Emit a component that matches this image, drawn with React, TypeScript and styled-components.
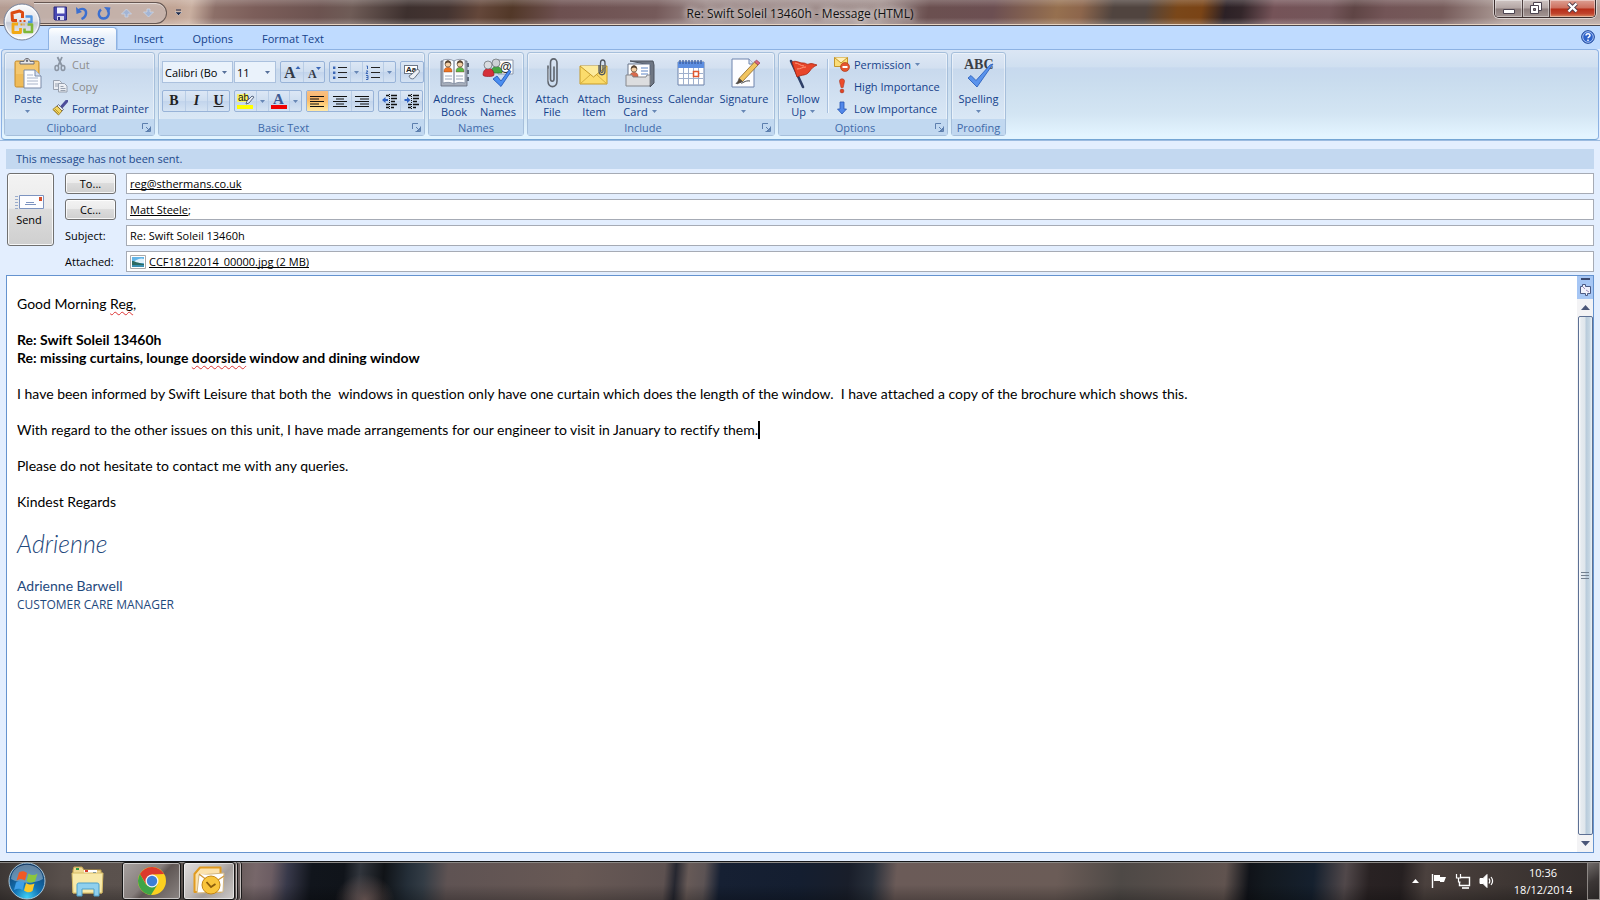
import React from 'react';
import styled, { createGlobalStyle, css } from 'styled-components';

const Global = createGlobalStyle`
  * { box-sizing: border-box; }
  body { margin: 0; background: #e3eefe; font-family: "Open Sans", "Noto Sans", sans-serif; font-size: 11px; line-height: 13px; color: #15428b; }
  button, input, select { font: inherit; color: inherit; margin: 0; }
  button { border: 0; padding: 0; background: none; }
  svg { display: block; flex: none; }
  a { color: inherit; }
`;

/* ---------- window frame ---------- */
const Page = styled.div`
  min-height: 100vh;
  display: flex;
  flex-direction: column;
`;
const TitleBar = styled.header`
  position: relative;
  height: 26px;
  display: flex;
  align-items: flex-start;
  justify-content: space-between;
  border-bottom: 1px solid #4b474d;
  box-shadow: inset 0 -1px #e6d3c2;
  background:
    linear-gradient(180deg, rgba(255,255,255,.2), rgba(255,255,255,0) 30%, rgba(255,255,255,0) 70%, rgba(255,255,255,.25)),
    linear-gradient(100deg, #b49c92 0, #c2a595 11%, #c9afa0 12%, #8c6f68 13.5%, #7c5e5a 16%, #6c5350 20%, #6f5c57 22%, #3d302e 25.5%, #443431 28%, #64473a 30%, #523828 32%, #6d5050 35%, #755a5a 41%, #9a8786 44%, #a08e8c 55%, #6b5050 58%, #6c4f52 62%, #96704f 66%, #8d664c 67.5%, #50443f 69.5%, #50443f 71.5%, #7a4719 73.5%, #7a4416 75%, #2c2126 76.5%, #33262a 77.5%, #755358 79.5%, #74565a 83%, #5f4545 84.500%, #735557 86.5%, #765b5a 90%, #ae9d98 94%, #b5a39c 100%);
`;
const QuickAccess = styled.div`
  display: flex;
  align-items: center;
  gap: 6px;
  height: 22px;
  margin: 2px 0 0 34px;
  padding: 0 10px 0 18px;
  border: 1px solid #655651;
  border-left: 0;
  border-radius: 0 11px 11px 0;
  background: rgba(205, 196, 196, .45);
  box-shadow: inset 0 1px rgba(255,255,255,.5);
`;
const IconButton = styled.button`
  display: flex;
  align-items: center;
  justify-content: center;
  min-width: 16px;
  height: 16px;
`;
const LeftGroup = styled.div`
  display: flex;
  align-items: center;
  gap: 3px;
  flex: 1;
`;
const Title = styled.h1`
  margin: 7px 0 0;
  font-size: 12px;
  line-height: 14px;
  font-weight: 400;
  color: #111;
  text-shadow: 0 0 6px #fff, 0 0 8px rgba(255,255,255,.8);
`;
const RightGroup = styled.div`
  flex: 1;
  display: flex;
  justify-content: flex-end;
`;
const WindowButtons = styled.div`
  display: flex;
  height: 18px;
  margin-right: 4px;
  border: 1px solid #3a2d2d;
  border-top: 0;
  border-radius: 0 0 5px 5px;
  box-shadow: 0 0 0 1px rgba(255,255,255,.55);
  overflow: hidden;
`;
const WindowButton = styled.button<{ $close?: boolean }>`
  width: ${p => (p.$close ? 46 : 27)}px;
  display: flex;
  align-items: center;
  justify-content: center;
  padding-bottom: 2px;
  box-shadow: inset 0 0 0 1px rgba(255,255,255,.4);
  background: ${p => p.$close
    ? 'linear-gradient(#dda093, #cd6e5c 48%, #b62d17 52%, #c0432c 80%, #d98a62)'
    : 'linear-gradient(#cfc5c3, #b3a5a3 48%, #8c7d7c 52%, #a39593)'};
  & + & { border-left: 1px solid #4d3f3f; }
`;
const Orb = styled.button`
  position: absolute;
  left: 3px;
  top: 3px;
  z-index: 2;
`;

/* ---------- tabs ---------- */
const Tabs = styled.nav`
  display: flex;
  align-items: flex-end;
  gap: 5px;
  height: 23px;
  padding: 0 4px 0 48px;
  background: #bfdbff;
`;
const Tab = styled.button<{ $active?: boolean }>`
  height: 22px;
  padding: 0 11px;
  border: 1px solid transparent;
  border-bottom: 0;
  border-radius: 4px 4px 0 0;
  position: relative;
  z-index: 1;
  ${p => p.$active && css`
    margin-bottom: -1px;
    height: 23px;
    background: linear-gradient(#fff, #e9f1fb 40%, #dfe9f5);
    border-color: #8db2e3;
    box-shadow: 1px 0 #a9c6ec, inset 0 1px #fff;
  `}
`;
const HelpButton = styled(IconButton)`
  margin: 0 0 4px auto;
`;

/* ---------- ribbon ---------- */
const Ribbon = styled.section`
  display: flex;
  gap: 3px;
  height: 91px;
  margin: 0 1px;
  padding: 2px 2px 3px;
  border: 1px solid #8db2e3;
  border-bottom-color: #74a5d4;
  border-radius: 4px;
  background: linear-gradient(#dbe6f4, #cfdff0 19%, #c7d9ee 20%, #c9dcee 35%, #d3e5f3 72%, #e3f4ff 96%);
`;
const Group = styled.section<{ $w: number }>`
  width: ${p => p.$w}px;
  display: flex;
  flex-direction: column;
  border: 1px solid #a6bfdb;
  border-radius: 3px;
  background: linear-gradient(#dee8f5, #d3e0f0 18%, #c8d9ed 20%, #d9e7f5 80%);
  box-shadow: inset 0 0 0 1px rgba(255,255,255,.45);
`;
const GroupBody = styled.div`
  flex: 1;
  display: flex;
  padding: 0 3px;
`;
const GroupFooter = styled.h2`
  display: flex;
  align-items: center;
  height: 16px;
  margin: 0;
  font-size: 11px;
  font-weight: 400;
  color: #3e6aaa;
  background: #c1d8f0;
  & > span { flex: 1; text-align: center; white-space: nowrap; }
`;
const BigButton = styled.button<{ $w: number }>`
  width: ${p => p.$w}px;
  flex: none;
  display: flex;
  flex-direction: column;
  align-items: center;
  gap: 3px;
  padding-top: 4px;
`;
const BigLabel = styled.span`
  display: flex;
  flex-direction: column;
  align-items: center;
  white-space: nowrap;
`;
const LabelLine = styled.span`
  display: flex;
  align-items: center;
  gap: 4px;
  height: 13px;
`;
const Divider = styled.span`
  width: 2px;
  margin: 6px 1px 6px 3px;
  border-left: 1px solid #a8c0de;
  background: #eef5fc;
`;
const SmallColumn = styled.div`
  display: flex;
  flex-direction: column;
  margin: 0 0 0 4px;
`;
const SmallButton = styled.button<{ $off?: boolean }>`
  display: flex;
  align-items: center;
  gap: 4px;
  height: 22px;
  white-space: nowrap;
  color: ${p => (p.$off ? '#8d8d8d' : '#15428b')};
`;
const FontRows = styled.div`
  display: flex;
  flex-direction: column;
  gap: 7px;
  padding-top: 8px;
`;
const FontRow = styled.div`
  display: flex;
  gap: 4px;
`;
const ButtonSet = styled.div`
  display: flex;
  height: 22px;
  border: 1px solid #98b3d8;
  border-radius: 2px;
  background: linear-gradient(#dce7f5, #cfdef0 48%, #c2d4ec 50%, #d5e3f3);
  overflow: hidden;
`;
const SetButton = styled.button<{ $w: number; $on?: boolean }>`
  width: ${p => p.$w}px;
  display: flex;
  align-items: center;
  justify-content: center;
  background: ${p => (p.$on ? 'linear-gradient(#f8bf83, #fbb768 40%, #ffd27c 70%, #ffe9a8)' : 'none')};
  & + & { border-left: 1px solid #b9cde6; }
`;
const ComboSet = styled.div`
  display: flex;
  gap: 1px;
`;
const Combo = styled.label<{ $w: number }>`
  display: flex;
  align-items: center;
  width: ${p => p.$w}px;
  height: 22px;
  padding: 0 5px 0 2px;
  border: 1px solid #abc1de;
  background: #eaf2fb;
  color: #000;
`;
const ComboSelect = styled.select`
  appearance: none;
  flex: 1;
  width: 0;
  border: 0;
  padding: 0;
  background: none;
  outline: 0;
`;

/* ---------- envelope ---------- */
const Compose = styled.main`
  flex: 1;
  display: flex;
  flex-direction: column;
  padding: 8px 6px 8px;
  background: #e3eefe;
  border-top: 1px solid #9cbbe0;
`;
const InfoBar = styled.p`
  margin: 0;
  height: 20px;
  padding: 3px 10px;
  line-height: 14px;
  color: #1e4a8c;
  background: #c3d8f0;
`;
const Envelope = styled.div`
  display: grid;
  grid-template-columns: 47px 1fr;
  gap: 11px;
  padding: 4px 0 3px 1px;
`;
const buttonSkin = css`
  border: 1px solid #707070;
  border-radius: 3px;
  color: #000;
  background: linear-gradient(#f3f3f3, #ebebeb 48%, #dcdcdc 50%, #cfcfcf);
  box-shadow: inset 0 0 0 1px rgba(255,255,255,.8);
`;
const SendButton = styled.button`
  ${buttonSkin}
  height: 73px;
  padding-right: 3px;
  display: flex;
  flex-direction: column;
  align-items: center;
  justify-content: center;
  gap: 3px;
`;
const Fields = styled.div`
  display: flex;
  flex-direction: column;
  gap: 5px;
`;
const FieldRow = styled.div`
  display: grid;
  grid-template-columns: 51px 1fr;
  gap: 10px;
  align-items: center;
  & > label, & > span { color: #000; }
`;
const PickButton = styled.button`
  ${buttonSkin}
  height: 21px;
`;
const Field = styled.div`
  display: flex;
  align-items: center;
  height: 21px;
  padding: 0 3px;
  border: 1px solid #a6abb5;
  background: #fff;
  color: #000;
  text-decoration-skip-ink: none;
  white-space: nowrap;
`;
const FieldInput = styled.input`
  flex: 1;
  min-width: 0;
  border: 0;
  padding: 0;
  outline: 0;
  background: none;
`;
const FileLink = styled.a`
  display: flex;
  align-items: center;
  gap: 3px;
`;

/* ---------- message body ---------- */
const Editor = styled.div`
  flex: 1;
  display: flex;
  border: 1px solid #6593cf;
  background: #fff;
`;
const MessageText = styled.article`
  flex: 1;
  padding: 19px 10px;
  font-family: Lato, "Open Sans", sans-serif;
  font-size: 14px;
  line-height: 18px;
  font-variant-ligatures: none;
  color: #000;
  white-space: pre-wrap;
  & > p { margin: 0 0 18px; }
`;
const Misspelt = styled.span`
  text-decoration: underline wavy #d33 1px;
  text-underline-offset: 2px;
  text-decoration-skip-ink: none;
`;
const Caret = styled.span`
  display: inline-block;
  width: 2px;
  height: 18px;
  vertical-align: top;
  background: #000;
`;
const Autograph = styled.p`
  font-size: 25px;
  line-height: 28px;
  font-weight: 300;
  font-style: italic;
  color: #1f497d;
`;
const SignOff = styled.p`
  padding-top: 2px;
  color: #1f497d;
`;
const JobTitle = styled.span`
  font-family: "Open Sans", sans-serif;
  font-size: 12px;
`;
const ScrollBar = styled.div`
  width: 16px;
  display: flex;
  flex-direction: column;
  align-items: center;
  background: #f3f3f5;
`;
const RulerToggle = styled.button`
  width: 16px;
  height: 23px;
  display: flex;
  justify-content: center;
  padding-top: 2px;
  background: #a6c6f4;
`;
const ScrollArrow = styled(IconButton)`
  height: 17px;
`;
const ScrollThumb = styled.div`
  flex: 1;
  width: 15px;
  display: flex;
  align-items: center;
  justify-content: center;
  border: 1px solid #5d7094;
  border-radius: 2px;
  background: linear-gradient(90deg, #fff, #e6ebf0 15%, #dfe6ec 45%, #b8cbdb 55%, #c5d6e3 80%, #eef3f7);
`;

/* ---------- taskbar ---------- */
const TaskBar = styled.footer`
  height: 39px;
  display: flex;
  align-items: stretch;
  border-top: 1px solid #15171a;
  box-shadow: inset 0 1px #8b8885;
  color: #fff;
  background:
    radial-gradient(ellipse 30px 26px at 22.8% 100%, rgba(112,90,86,.8), transparent),
    linear-gradient(180deg, rgba(0,0,0,0) 60%, rgba(0,0,0,.25)),
    linear-gradient(95deg, #3d3735 0, #59504c 4%, #5d5450 14%, #77676a 16%, #6c5d63 17%, #38394a 18%, #11151c 19.5%, #10141a 21.5%, #31353c 22.5%, #101317 24%, #242e38 25.5%, #333c45 26.5%, #5f5353 28%, #685955 36%, #5d5150 41.5%, #262730 42.2%, #675a57 43%, #5c5354 44%, #162033 45%, #141e30 50%, #191e2a 53%, #29303b 54.5%, #6b5b58 56%, #6b5c57 66%, #4e4946 70%, #60534f 76.5%, #101319 78%, #13191f 79%, #15202e 82%, #51484a 84%, #292223 85.5%, #262021 87.5%, #4b413e 89%, #3f3734 94%, #322c2b 100%);
`;
const TaskButton = styled.button<{ $w: number; $state?: 'open' | 'active' }>`
  width: ${p => p.$w}px;
  display: flex;
  align-items: center;
  justify-content: center;
  margin-right: 2px;
  border: 1px solid transparent;
  border-radius: 3px;
  ${p => p.$state && css`
    border-color: #151515;
    background: ${p.$state === 'open'
      ? 'linear-gradient(135deg, #a8a2a0, #857d7b 45%, #5f5654 55%, #8b8583)'
      : 'linear-gradient(135deg, #e2dfde, #bdb8b6 45%, #a39d9b 60%, #cfcbc9)'};
    box-shadow: inset 0 0 0 1px rgba(255,255,255,.55);
  `}
`;
const StackEdge = styled.span`
  width: 4px;
  margin-left: -3px;
  border-right: 1px solid #1c1a1a;
  border-radius: 0 3px 3px 0;
  box-shadow: inset -1px 0 #c5c0be;
  & + & { margin-left: 0; }
`;
const Tray = styled.div`
  margin-left: auto;
  display: flex;
  align-items: center;
  gap: 8px;
`;
const Clock = styled.time`
  width: 72px;
  margin-left: 4px;
  text-align: center;
  line-height: 17px;
`;
const ShowDesktop = styled.button`
  width: 13px;
  align-self: stretch;
  border: 1px solid #8d8885;
  background: linear-gradient(150deg, #6f6a68, #3c3736 50%, #292524);
`;

/* ---------- drawings ---------- */
const Down = ({ c = '#6787b5' }: { c?: string }) => (
  <svg width="5" height="3"><path d="M0 0h5L2.5 3z" fill={c} /></svg>
);
const Launcher = () => (
  <IconButton aria-label="More settings">
    <svg width="9" height="9" fill="none" stroke="#5d7fae">
      <path d="M.5 6V.5H6" /><path d="M3.500 8.500h5v-5M4 4l3 3" /><path d="M5 7.500h2.500V5" />
    </svg>
  </IconButton>
);
const OfficeOrb = () => (
  <svg width="38" height="38" viewBox="0 0 38 38">
    <defs>
      <linearGradient id="orb" x1="0" y1="0" x2="0" y2="1">
        <stop offset="0" stopColor="#fdfdfd" /><stop offset=".48" stopColor="#dfe2ea" />
        <stop offset=".52" stopColor="#c3c9d6" /><stop offset="1" stopColor="#fff" />
      </linearGradient>
    </defs>
    <circle cx="19" cy="19" r="18" fill="url(#orb)" stroke="#76829a" />
    <circle cx="19" cy="19" r="16.500" fill="none" stroke="#fff" opacity=".8" />
    <g fill="none" strokeLinejoin="round">
      <path d="M14 17.500H9.500L9 10l7.500-2 3 1.500V15" stroke="#dc4a12" strokeWidth="3" />
      <path d="M22.500 13.500h6V19H25" stroke="#4f94e0" strokeWidth="2.400" />
      <path d="M15 21h-5v8.500h7.500V25" stroke="#f2a916" strokeWidth="2.800" />
      <path d="M24.500 21.500H29V29h-7.500v-3.500" stroke="#7fb737" strokeWidth="2.600" />
      <path d="M16.500 18h2M20.500 18h2" stroke="#dc4a12" strokeWidth="2" /><path d="M17.500 21.500h4" stroke="#e0a020" strokeWidth="2" strokeDasharray="2 1" />
    </g>
  </svg>
);
const Save = () => (
  <svg width="15" height="15" viewBox="0 0 15 15">
    <path d="M1 1h12.500v13H2L1 13z" fill="#4a49b4" stroke="#29297e" />
    <path d="M4 1.500h7.500v6H4z" fill="#f3f5ff" /><path d="M4 10h7v4H4z" fill="#d5d8ee" /><path d="M5 11h2v3H5z" fill="#29297e" />
  </svg>
);
const Undo = ({ color = '#3b6fd0' }: { color?: string }) => (
  <svg width="14" height="14" viewBox="0 0 14 14">
    <path d="M3 4.500c4-3 8.500-1.500 8 3-.3 2.500-2 4.500-4.500 5.500" fill="none" stroke={color} strokeWidth="2.400" />
    <path d="M1 1l.5 7L7 6z" fill={color} />
  </svg>
);
const Redo = () => (
  <svg width="14" height="14" viewBox="0 0 14 14">
    <path d="M4 3.500C0 7 2 12.500 6.500 12.500c5 0 6.500-5.500 4-8.500" fill="none" stroke="#3b6fd0" strokeWidth="2.400" />
    <path d="M7 1l6.500.5L12 7z" fill="#3b6fd0" />
  </svg>
);
const PaleArrow = ({ up }: { up?: boolean }) => (
  <svg width="11" height="10" viewBox="0 0 11 10">
    <path d={up ? 'M5.500 1L10.500 6H7v3H4V6H.5z' : 'M5.500 9L10.500 4H7V1H4v3H.5z'} fill="#a3b4d3" stroke="#ccd5e6" strokeWidth=".8" />
  </svg>
);
const Paste = () => (
  <svg width="32" height="32" viewBox="0 0 32 32">
    <rect x="3" y="4" width="24" height="26" rx="1.500" fill="#efbb58" stroke="#c58c2c" />
    <path d="M4 5h22v12H4z" fill="#f6cf7e" opacity=".6" />
    <path d="M8 7V4.500h4c0-4 6-4 6 0h4V7z" fill="#e9e9ec" stroke="#6c6c74" />
    <circle cx="15" cy="3.800" r="1.200" fill="#6c6c74" />
    <path d="M12 13h11l6 6v12H12z" fill="#fbfcff" stroke="#7b8ba8" />
    <path d="M23 13v6h6" fill="#d5dff0" stroke="#7b8ba8" />
    <path d="M15 18h6M15 21h11M15 24h11M15 27h11" stroke="#a9b4c9" />
  </svg>
);
const Cut = () => (
  <svg width="16" height="16" viewBox="0 0 16 16" fill="none" stroke="#8b95a3">
    <path d="M5.500 1l4.500 9M10 1L6 10" strokeWidth="1.800" />
    <ellipse cx="4.800" cy="12" rx="1.800" ry="2.500" strokeWidth="1.500" /><ellipse cx="11" cy="12" rx="1.800" ry="2.500" strokeWidth="1.500" />
  </svg>
);
const Copy = () => (
  <svg width="16" height="16" viewBox="0 0 16 16" fill="#eceff4" stroke="#98a1af">
    <path d="M1.500 2.500h6l2 2v7h-8z" /><path d="M3 6h4M3 8h4" />
    <path d="M6.500 5.500h6l2.500 2.500v6h-8.500z" /><path d="M8.500 8.500h3M8.500 10.500h5M8.500 12.500h5" />
  </svg>
);
const Brush = () => (
  <svg width="16" height="16" viewBox="0 0 16 16">
    <path d="M15 .8l-5 5.700" stroke="#4d4d9a" strokeWidth="3" strokeLinecap="round" />
    <path d="M6.500 4.500l5 5-1.500 1.500-5-5z" fill="#e4e6ef" stroke="#555b70" strokeWidth=".8" />
    <path d="M5 6l5 5-3.500 4L.8 9.500z" fill="#f2d661" stroke="#8a6b16" strokeWidth=".8" />
    <path d="M3 9l4 4M2 10l4 4" stroke="#a8851f" strokeWidth=".8" />
  </svg>
);
const GrowFont = ({ small }: { small?: boolean }) => (
  <svg width="18" height="18" viewBox="0 0 18 18">
    <text x={small ? 3 : 1} y="15" fontFamily="Liberation Serif, serif" fontWeight="700" fontSize={small ? 12 : 16} fill="#333b48">A</text>
    <path d={small ? 'M11 4h5l-2.500 3z' : 'M12.500 6h5L15 3z'} fill="#3a66b5" />
  </svg>
);
const ListIcon = ({ numbered }: { numbered?: boolean }) => (
  <svg width="16" height="16" viewBox="0 0 16 16">
    <path d="M6 3.500h9M6 8.500h9M6 13.500h9" stroke="#222" strokeWidth="1.200" />
    {numbered
      ? <path d="M1.500 2h1v3M1 7h2L1 9.500h2M1 11.500h2v2H1.500h1.500v2H1" fill="none" stroke="#3a66b5" />
      : <path d="M1 2.500h2.400v2.400H1zM1 7.500h2.400v2.400H1zM1 12.500h2.400v2.400H1z" fill="#3a66b5" />}
  </svg>
);
const ClearFormat = () => (
  <svg width="18" height="18" viewBox="0 0 18 18">
    <rect x="1.500" y="2.500" width="13" height="8" fill="#fff" stroke="#6b7687" />
    <text x="3" y="9" fontSize="8" fontWeight="700" fontFamily="Liberation Sans, sans-serif" fill="#222">Aa</text>
    <path d="M6 13l3-2 5-4.500c2-.5 3 1.500 2 3L11 15.500c-2 1-4.500 0-5-2.500z" fill="#eceff5" stroke="#6b7687" />
  </svg>
);
const Letter = styled.span<{ $kind: 'b' | 'i' | 'u' }>`
  font-family: "Liberation Serif", serif;
  font-size: 14px;
  line-height: 14px;
  font-weight: 700;
  color: #222;
  font-style: ${p => (p.$kind === 'i' ? 'italic' : 'normal')};
  text-decoration: ${p => (p.$kind === 'u' ? 'underline' : 'none')};
`;
const Highlight = () => (
  <svg width="18" height="18" viewBox="0 0 18 18">
    <path d="M0 2h11v8H0z" fill="#f4f46a" />
    <text x="1" y="9" fontSize="10" fontFamily="Liberation Sans, sans-serif" fill="#111">ab</text>
    <path d="M9 12l1-3 5-5 2 1-5 6z" fill="#e8ecf4" stroke="#5b6a84" /><path d="M0 13h16v4H0z" fill="#ff0" />
  </svg>
);
const FontColor = () => (
  <svg width="18" height="18" viewBox="0 0 18 18">
    <text x="3" y="12" fontSize="15" fontWeight="700" fontFamily="Liberation Serif, serif" fill="#3c5a92">A</text>
    <path d="M1 13h16v4H1z" fill="#f00000" />
  </svg>
);
const Align = ({ d }: { d: string }) => (
  <svg width="15" height="13" viewBox="0 0 15 13"><path d={d} stroke="#111" strokeWidth="1.200" /></svg>
);
const Indent = ({ out }: { out?: boolean }) => (
  <svg width="16" height="15" viewBox="0 0 16 15">
    <path d="M4 1.500h3M9 1.500h6M9 4.500h6M9 7.500h4M4 10.500h3M9 10.500h6M4 13.500h3M9 13.500h3" stroke="#111" strokeWidth="1.300" />
    <path d="M7.500 0v15" stroke="#111" strokeDasharray="1 1" />
    <path d={out ? 'M0 6l3.500-3v2H6v2H3.500v2z' : 'M6.500 6L3 3v2H.5v2H3v2z'} fill="#2f62c4" />
  </svg>
);
const Person = ({ x, y, c }: { x: number; y: number; c: string }) => (
  <g transform={`translate(${x} ${y})`}>
    <path d="M0 11c0-5 8-5 8 0v1H0z" fill={c} stroke="#7a3a1a" strokeWidth=".4" />
    <circle cx="4" cy="4" r="3" fill="#f5cfa4" stroke="#4a3422" strokeWidth=".6" /><path d="M1 4c0-5 6-5 6 0-2-2-4-2-6 0z" fill="#5a4632" />
  </g>
);
const AddressBook = () => (
  <svg width="32" height="32" viewBox="0 0 32 32">
    <path d="M3 4h26v25H3z" fill="#a7afbc" stroke="#5f6878" strokeWidth=".8" />
    <path d="M5 3c4-1 8-1 11 1v23c-3-2-7-2-11-1zM27 3c-4-1-8-1-11 1v23c3-2 7-2 11-1z" fill="#fcfdff" stroke="#7f8aa0" strokeWidth=".8" />
    <Person x={6} y={3} c="#ee7422" /><Person x={18} y={3} c="#58b948" />
    <path d="M7 19h7M7 22h7M18 19h7M18 22h7" stroke="#9aa6ba" />
    <path d="M29 6h2v4h-2zM29 13h2v4h-2zM29 20h2v4h-2z" fill="#5e6b7f" />
  </svg>
);
const CheckNames = () => (
  <svg width="32" height="32" viewBox="0 0 32 32">
    <path d="M16 3h15v14H16z" fill="#fff" stroke="#8b97ab" />
    <text x="18" y="14" fontSize="12" fontWeight="700" fontFamily="Liberation Sans, sans-serif" fill="#333">@</text>
    <path d="M9 16c0-9 11-9 11 0z" fill="#46a544" stroke="#27702a" strokeWidth=".6" /><circle cx="14" cy="6" r="4" fill="#cdd1d6" stroke="#63686f" strokeWidth=".7" />
    <path d="M1 18c0-9 11-9 11 0 0 2-11 2-11 0z" fill="#d5303a" stroke="#8d141c" strokeWidth=".6" /><circle cx="6" cy="8" r="4" fill="#d9dce0" stroke="#63686f" strokeWidth=".7" />
    <path d="M11 22l4-3 4 5 8-11 2 1.500-10 15z" fill="#4a8df0" stroke="#1b53b5" strokeWidth=".8" />
  </svg>
);
const Clip = () => (
  <svg width="32" height="32" viewBox="0 0 32 32" fill="none" strokeLinecap="round">
    <g stroke="#5e646d" strokeWidth="1.600"><path d="M12 9v15c0 7.500 9 7.500 9 0V6c0-5.500-6.500-5.500-6.500 0v16c0 3 3.500 3 3.500 0V10" /></g>
    <path d="M12.300 12v12" stroke="#c8cdd4" strokeWidth=".6" />
  </svg>
);
const AttachItem = () => (
  <svg width="32" height="32" viewBox="0 0 32 32">
    <path d="M2 9h27v18H2z" fill="#fbdc6c" stroke="#c69a28" /><path d="M2 27l10-9M29 27l-10-9" stroke="#d6ae3c" />
    <path d="M2 9l13.500 11L29 9" fill="#fdeb9c" stroke="#c69a28" />
    <path d="M21 8v6c0 5 6 5 6 0V6c0-4-4.500-4-4.500 0v8c0 2 2.500 2 2.500 0V8" fill="none" stroke="#4f555e" strokeWidth="1.300" />
  </svg>
);
const BusinessCard = () => (
  <svg width="32" height="32" viewBox="0 0 32 32">
    <path d="M6 4h23l1 4v18l-4 4V8z" fill="#6e7683" stroke="#4c535f" />
    <path d="M4 7h22v16H4z" fill="#fff" stroke="#68748a" /><Person x={6} y={8} c="#d96a4c" />
    <path d="M17 11h7M17 14h7M17 17h7" stroke="#5f86c6" strokeWidth="1.200" />
    <path d="M2 18h6l1 2h13l1-2h3v10l-1 1H2z" fill="#dcdddf" stroke="#85878c" />
  </svg>
);
const Calendar = () => (
  <svg width="32" height="32" viewBox="0 0 32 32">
    <path d="M3 5h26v23H3z" fill="#fff" stroke="#6d82aa" /><path d="M3 5h26v6H3z" fill="#5d8ee0" />
    <path d="M4 16.500h24M4 21.500h24M8.500 11v17M13.500 11v17M18.500 11v17M23.500 11v17" stroke="#9fb0cd" />
    <path d="M5 3v4M8 3v4M11 3v4M14 3v4M17 3v4M20 3v4M23 3v4M26 3v4" stroke="#3a5c9f" strokeWidth="1.300" />
    <path d="M18.500 14.500h5v5h-5z" fill="#fff" stroke="#e0562f" strokeWidth="1.500" />
  </svg>
);
const Signature = () => (
  <svg width="32" height="32" viewBox="0 0 32 32">
    <path d="M4 2h17l5 5v23H4z" fill="#fdfdff" stroke="#6f84ad" /><path d="M21 2v5h5" fill="#dde6f5" stroke="#6f84ad" />
    <path d="M8 27c2-4 4-2 5-1s4-3 9-2" fill="none" stroke="#444" />
    <path d="M11 21.500L26.500 5l3.500 3-15.500 16.500z" fill="#f2c560" stroke="#8a6524" strokeWidth=".8" />
    <path d="M11 21.500l3.500 3L9 27z" fill="#5a4a3a" stroke="#444" strokeWidth=".6" /><path d="M26.500 5l2-2 3.500 3-2 2z" fill="#d9667c" stroke="#8c3346" strokeWidth=".6" />
  </svg>
);
const Flag = () => (
  <svg width="32" height="32" viewBox="0 0 32 32">
    <path d="M4 4l12 26" stroke="#2f4068" strokeWidth="2.600" strokeLinecap="round" />
    <path d="M5 5c4-2 7 1 11 1s3 2 6 1 4 0 8 1c-4 2-5 3-8 7s-6 2-12 5z" fill="#e8452a" stroke="#a9240f" strokeWidth=".8" />
    <path d="M8 6c4 0 5 3 9 3M10 12c4 0 5-2 9-2" stroke="#ff9a7d" fill="none" />
  </svg>
);
const Permission = () => (
  <svg width="16" height="16" viewBox="0 0 16 16">
    <path d="M.5 1.500h13v9H.5z" fill="#fbdd78" stroke="#c3952a" /><path d="M.5 1.500L7 7l6.500-5.500" fill="#fff0b8" stroke="#c3952a" />
    <circle cx="11" cy="11" r="4.500" fill="#e4562f" stroke="#a8300f" strokeWidth=".6" /><path d="M8.500 10h5v2h-5z" fill="#fff" />
  </svg>
);
const High = () => (
  <svg width="16" height="16" viewBox="0 0 16 16">
    <path d="M5.500 3c0-3 5-3 5 0 0 2-1 4-1.300 6.500H7C6.700 7 5.500 5 5.500 3z" fill="#ec4c2c" stroke="#9f2812" strokeWidth=".5" />
    <circle cx="8" cy="13" r="1.900" fill="#e04425" stroke="#9f2812" strokeWidth=".5" />
  </svg>
);
const Low = () => (
  <svg width="16" height="16" viewBox="0 0 16 16"><path d="M6 2h4v7h2.500L8 14 3.500 9H6z" fill="#5288ea" stroke="#2757b4" strokeWidth=".8" /></svg>
);
const Spelling = () => (
  <svg width="32" height="32" viewBox="0 0 32 32">
    <text x="1" y="12" fontSize="14" fontWeight="700" fontFamily="Liberation Serif, serif" fill="#3b3f46">ABC</text>
    <path d="M5 21l3-2.500 5 5L27 8l3-1-16 23z" fill="#5a93ec" stroke="#2258b8" strokeWidth=".8" />
  </svg>
);
const Help = () => (
  <svg width="14" height="14" viewBox="0 0 14 14">
    <circle cx="7" cy="7" r="6.300" fill="#2d62cb" stroke="#183f92" /><circle cx="7" cy="7" r="5.300" fill="none" stroke="#c5dafc" strokeWidth=".8" />
    <path d="M5 5.500c0-2.500 4-2.500 4 0C9 7 7 6.800 7 8.300M7 9.500V11" fill="none" stroke="#fff" strokeWidth="1.500" />
  </svg>
);
const SendIcon = () => (
  <svg width="30" height="16" viewBox="0 0 30 16">
    <path d="M5.500 1.500h24v13h-24z" fill="#fdfdff" stroke="#7c93c0" /><path d="M25 3h3v4h-3z" fill="#d4502f" />
    <path d="M12 8.500h8M11 10.500h11" stroke="#7c93c0" /><path d="M1 2.500h3M1 5.500h3M1 8.500h3M1 11.500h3M1 14.500h3" stroke="#9aaccc" />
  </svg>
);
const Picture = () => (
  <svg width="16" height="16" viewBox="0 0 16 16">
    <path d="M.5 1.500h15v13H.5z" fill="#fff" stroke="#a9a9a9" /><path d="M2 3h12v10H2z" fill="#65b6e8" />
    <path d="M2 8c4-1 7-5 12-3v4H2z" fill="#dff1fb" /><path d="M2 7c3 0 5 2 12 3v3H2z" fill="#2c6a62" /><path d="M2 11h12v2H2z" fill="#3b8fb0" />
  </svg>
);
const Start = () => (
  <svg width="38" height="38" viewBox="0 0 38 38">
    <defs>
      <radialGradient id="start" cx=".5" cy=".95" r=".9">
        <stop offset="0" stopColor="#3fd0f5" /><stop offset=".4" stopColor="#1273b5" /><stop offset="1" stopColor="#123a66" />
      </radialGradient>
    </defs>
    <circle cx="19" cy="19" r="18" fill="url(#start)" stroke="#a9c7da" />
    <path d="M3 17C4-2 34-2 35 17c-9 5-23 5-32 0z" fill="#dcecf5" opacity=".4" />
    <path d="M11 10.500c3-2 5.500-1.500 8 .5l-2 7.500c-3-2-5.500-2-8.500 0z" fill="#ef5a24" /><path d="M20.500 11.500c3 2 6 2 9 0l-2.500 8c-3 1.500-5.500 1.500-8.500-.5z" fill="#8cc63e" />
    <path d="M8 20.500c3-2 6-1.500 8.500 0l-2 7.500c-3-2-5.500-1.500-8.500 0z" fill="#3f9fe8" /><path d="M18 21c3 2 5.500 2 8.500.5L24.500 29c-3 2-6 1.500-8.500-.5z" fill="#fcc829" />
  </svg>
);
const Explorer = () => (
  <svg width="34" height="32" viewBox="0 0 34 32">
    <path d="M2 5l1-3h8l2 3h17l1 23H2z" fill="#f0d992" stroke="#bf9e4b" />
    <path d="M5 3h3v2H5z" fill="#2f9b48" /><path d="M13 5h13v3H13z" fill="#fff" /><path d="M14 5h3v2h-3z" fill="#d43d2a" /><path d="M22 7h3v2h-3z" fill="#3b79c5" />
    <path d="M1 8h31l-1 20H2z" fill="#f8e9a9" stroke="#d7bc67" />
    <path d="M6 31V20c0-2 1-2 3-2h16c2 0 3 0 3 2v11h-5v-7H11v7z" fill="#8fd0ee" stroke="#4c9fc9" />
  </svg>
);
const Chrome = () => (
  <svg width="30" height="30" viewBox="0 0 30 30">
    <circle cx="15" cy="15" r="14" fill="#fbd01f" />
    <path d="M2.900 8A14 14 0 0 1 27.100 8L15 8.500 9 18z" fill="#dc3a2c" />
    <path d="M2.900 8A14 14 0 0 0 14 29l6.500-10.500L15 21l-6-2.500z" fill="#3fa447" />
    <circle cx="15" cy="15" r="6.500" fill="#f4f4f4" /><circle cx="15" cy="15" r="5.200" fill="#3d7fd6" />
  </svg>
);
const Outlook = () => (
  <svg width="34" height="32" viewBox="0 0 34 32">
    <path d="M8 2.500h20.500V27H2.500V9z" fill="#fbe2ad" stroke="#e19b20" strokeWidth="2" strokeLinejoin="round" />
    <path d="M7 10l25-2-1 19-26 1z" fill="#fff" stroke="#d3b680" /><path d="M7 9l13 10L32 11" fill="#fff" stroke="#d39a3a" strokeWidth="1.400" />
    <circle cx="19" cy="20" r="9" fill="#f9c53c" stroke="#c38716" /><path d="M14.500 17l4.500 5 4.500-3" fill="none" stroke="#8a5c0c" strokeWidth="1.800" />
  </svg>
);

const alignPaths = {
  left: 'M0 1.500h14M0 4h9M0 6.500h14M0 9h9M0 11.500h14',
  center: 'M0 1.500h14M3 4h8M0 6.500h14M3 9h8M0 11.500h14',
  right: 'M0 1.500h14M5 4h9M0 6.500h14M5 9h9M0 11.500h14',
};

type BigProps = { w: number; icon: React.ReactNode; lines: string[]; menu?: boolean };
const Big = ({ w, icon, lines, menu }: BigProps) => (
  <BigButton $w={w}>
    {icon}
    <BigLabel>
      {lines.map((line, i) => (
        <LabelLine key={line}>{line}{menu && i === 1 && <Down />}</LabelLine>
      ))}
      {menu && lines.length === 1 && <LabelLine><Down /></LabelLine>}
    </BigLabel>
  </BigButton>
);
type RibbonGroupProps = { w: number; name: string; launcher?: boolean; children: React.ReactNode };
const RibbonGroup = ({ w, name, launcher, children }: RibbonGroupProps) => (
  <Group $w={w}>
    <GroupBody>{children}</GroupBody>
    <GroupFooter><span>{name}</span>{launcher && <Launcher />}</GroupFooter>
  </Group>
);

export default function App() {
  return (
    <Page>
      <Global />
      <TitleBar>
        <Orb aria-label="Office menu"><OfficeOrb /></Orb>
        <LeftGroup>
          <QuickAccess>
            <IconButton aria-label="Save"><Save /></IconButton>
            <IconButton aria-label="Undo"><Undo /></IconButton>
            <IconButton aria-label="Redo"><Redo /></IconButton>
            <IconButton aria-label="Previous item"><PaleArrow up /></IconButton>
            <IconButton aria-label="Next item"><PaleArrow /></IconButton>
          </QuickAccess>
          <IconButton aria-label="Customise toolbar">
            <svg width="7" height="7"><path d="M1 1h5" stroke="#222c4a" /><path d="M0 3h7L3.500 6.500z" fill="#222c4a" stroke="#fff" strokeWidth=".4" /></svg>
          </IconButton>
        </LeftGroup>
        <Title>Re: Swift Soleil 13460h - Message (HTML)</Title>
        <RightGroup>
          <WindowButtons>
            <WindowButton aria-label="Minimise"><svg width="12" height="14"><path d="M.5 8.500h11v4H.5z" fill="#fff" stroke="#4c4450" /></svg></WindowButton>
            <WindowButton aria-label="Restore">
              <svg width="12" height="12" fill="#fff" stroke="#4c4450"><path d="M3.500.5h8v8h-8z" /><path d="M.5 3.500h8v8h-8z" /><path d="M3.500 6.500h2v2h-2z" fill="#8c7d7c" /></svg>
            </WindowButton>
            <WindowButton $close aria-label="Close">
              <svg width="13" height="11"><path d="M2.500 1.500l8 8M10.500 1.500l-8 8" stroke="#4c3a48" strokeWidth="4" /><path d="M2.500 1.500l8 8M10.500 1.500l-8 8" stroke="#fff" strokeWidth="2.400" /></svg>
            </WindowButton>
          </WindowButtons>
        </RightGroup>
      </TitleBar>
      <Tabs>
        <Tab $active>Message</Tab>
        <Tab>Insert</Tab>
        <Tab>Options</Tab>
        <Tab>Format Text</Tab>
        <HelpButton aria-label="Help"><Help /></HelpButton>
      </Tabs>
      <Ribbon>
        <RibbonGroup w={151} name="Clipboard" launcher>
          <Big w={40} icon={<Paste />} lines={['Paste']} menu />
          <SmallColumn>
            <SmallButton $off><Cut />Cut</SmallButton>
            <SmallButton $off><Copy />Copy</SmallButton>
            <SmallButton><Brush />Format Painter</SmallButton>
          </SmallColumn>
        </RibbonGroup>
        <RibbonGroup w={267} name="Basic Text" launcher>
          <FontRows>
            <FontRow>
              <ComboSet>
                <Combo $w={71}>
                  <ComboSelect aria-label="Font"><option>Calibri (Bo</option></ComboSelect><Down c="#56709a" />
                </Combo>
                <Combo $w={42}>
                  <ComboSelect aria-label="Font size"><option>11</option></ComboSelect><Down c="#56709a" />
                </Combo>
              </ComboSet>
              <ButtonSet>
                <SetButton $w={22} aria-label="Grow font"><GrowFont /></SetButton>
                <SetButton $w={21} aria-label="Shrink font"><GrowFont small /></SetButton>
              </ButtonSet>
              <ButtonSet>
                <SetButton $w={20} aria-label="Bullets"><ListIcon /></SetButton>
                <SetButton $w={12} aria-label="Bullet styles"><Down /></SetButton>
                <SetButton $w={21} aria-label="Numbering"><ListIcon numbered /></SetButton>
                <SetButton $w={12} aria-label="Numbering styles"><Down /></SetButton>
              </ButtonSet>
              <ButtonSet>
                <SetButton $w={22} aria-label="Clear formatting"><ClearFormat /></SetButton>
              </ButtonSet>
            </FontRow>
            <FontRow>
              <ButtonSet>
                <SetButton $w={22}><Letter $kind="b">B</Letter></SetButton>
                <SetButton $w={22}><Letter $kind="i">I</Letter></SetButton>
                <SetButton $w={22}><Letter $kind="u">U</Letter></SetButton>
              </ButtonSet>
              <ButtonSet>
                <SetButton $w={21} aria-label="Highlight"><Highlight /></SetButton>
                <SetButton $w={12} aria-label="Highlight colours"><Down /></SetButton>
                <SetButton $w={21} aria-label="Font colour"><FontColor /></SetButton>
                <SetButton $w={12} aria-label="Font colours"><Down /></SetButton>
              </ButtonSet>
              <ButtonSet>
                <SetButton $w={21} $on aria-label="Align left"><Align d={alignPaths.left} /></SetButton>
                <SetButton $w={23} aria-label="Centre"><Align d={alignPaths.center} /></SetButton>
                <SetButton $w={22} aria-label="Align right"><Align d={alignPaths.right} /></SetButton>
              </ButtonSet>
              <ButtonSet>
                <SetButton $w={21} aria-label="Decrease indent"><Indent out /></SetButton>
                <SetButton $w={22} aria-label="Increase indent"><Indent /></SetButton>
              </ButtonSet>
            </FontRow>
          </FontRows>
        </RibbonGroup>
        <RibbonGroup w={96} name="Names">
          <Big w={44} icon={<AddressBook />} lines={['Address', 'Book']} />
          <Big w={44} icon={<CheckNames />} lines={['Check', 'Names']} />
        </RibbonGroup>
        <RibbonGroup w={248} name="Include" launcher>
          <Big w={42} icon={<Clip />} lines={['Attach', 'File']} />
          <Big w={42} icon={<AttachItem />} lines={['Attach', 'Item']} />
          <Big w={50} icon={<BusinessCard />} lines={['Business', 'Card']} menu />
          <Big w={52} icon={<Calendar />} lines={['Calendar']} />
          <Big w={54} icon={<Signature />} lines={['Signature']} menu />
        </RibbonGroup>
        <RibbonGroup w={170} name="Options" launcher>
          <Big w={42} icon={<Flag />} lines={['Follow', 'Up']} menu />
          <Divider />
          <SmallColumn>
            <SmallButton><Permission />Permission <Down /></SmallButton>
            <SmallButton><High />High Importance</SmallButton>
            <SmallButton><Low />Low Importance</SmallButton>
          </SmallColumn>
        </RibbonGroup>
        <RibbonGroup w={55} name="Proofing">
          <Big w={47} icon={<Spelling />} lines={['Spelling']} menu />
        </RibbonGroup>
      </Ribbon>
      <Compose>
        <InfoBar>This message has not been sent.</InfoBar>
        <Envelope>
          <SendButton><SendIcon />Send</SendButton>
          <Fields>
            <FieldRow>
              <PickButton>To...</PickButton>
              <Field><a href="mailto:reg@sthermans.co.uk">reg@sthermans.co.uk</a><FieldInput aria-label="To" /></Field>
            </FieldRow>
            <FieldRow>
              <PickButton>Cc...</PickButton>
              <Field><a href="#matt-steele">Matt Steele</a>;<FieldInput aria-label="Cc" /></Field>
            </FieldRow>
            <FieldRow>
              <label htmlFor="subject">Subject:</label>
              <Field><FieldInput id="subject" defaultValue="Re: Swift Soleil 13460h" /></Field>
            </FieldRow>
            <FieldRow>
              <span>Attached:</span>
              <Field><FileLink href="#attachment"><Picture />CCF18122014_00000.jpg (2 MB)</FileLink></Field>
            </FieldRow>
          </Fields>
        </Envelope>
        <Editor>
          <MessageText>
            <p>Good Morning <Misspelt>Reg</Misspelt>,</p>
            <p><b>Re: Swift Soleil 13460h<br />Re: missing curtains, lounge <Misspelt>doorside</Misspelt> window and dining window</b></p>
            <p>I have been informed by Swift Leisure that both the  windows in question only have one curtain which does the length of the window.  I have attached a copy of the brochure which shows this.</p>
            <p>With regard to the other issues on this unit, I have made arrangements for our engineer to visit in January to rectify them.<Caret /></p>
            <p>Please do not hesitate to contact me with any queries.</p>
            <p>Kindest Regards</p>
            <Autograph>Adrienne</Autograph>
            <SignOff>Adrienne Barwell<br /><JobTitle>CUSTOMER CARE MANAGER</JobTitle></SignOff>
          </MessageText>
          <ScrollBar>
            <RulerToggle aria-label="Show ruler">
              <svg width="13" height="19" viewBox="0 0 13 19">
                <path d="M2 0h9v2H2z" fill="#3b4a70" />
                <path d="M1.500 8.500h2v-2h3v2h5v7h-3v2h-2v-2h-5z" fill="#f1f2fb" stroke="#4c5a84" /><path d="M4 9l2 2M7 12l3 2" stroke="#a58fbd" />
              </svg>
            </RulerToggle>
            <ScrollArrow aria-label="Scroll up"><svg width="9" height="5"><path d="M0 5h9L4.500 0z" fill="#4a5678" /></svg></ScrollArrow>
            <ScrollThumb><svg width="8" height="8"><path d="M0 .5h8M0 3.500h8M0 6.500h8" stroke="#73808f" /></svg></ScrollThumb>
            <ScrollArrow aria-label="Scroll down"><svg width="9" height="5"><path d="M0 0h9L4.500 5z" fill="#4a5678" /></svg></ScrollArrow>
          </ScrollBar>
        </Editor>
      </Compose>
      <TaskBar>
        <TaskButton $w={54} aria-label="Start"><Start /></TaskButton>
        <TaskButton $w={64} aria-label="File explorer"><Explorer /></TaskButton>
        <TaskButton $w={59} $state="open" aria-label="Chrome"><Chrome /></TaskButton>
        <TaskButton $w={52} $state="active" aria-label="Outlook"><Outlook /></TaskButton>
        <StackEdge /><StackEdge />
        <Tray>
          <IconButton aria-label="Show hidden icons"><svg width="7" height="4"><path d="M0 4h7L3.500 0z" fill="#fff" /></svg></IconButton>
          <IconButton aria-label="Action centre"><svg width="16" height="16"><path d="M1.500 1v14" stroke="#fff" strokeWidth="1.400" /><path d="M3 2h6v2h6l-2 5H9V8H3z" fill="#fff" /></svg></IconButton>
          <IconButton aria-label="Network">
            <svg width="16" height="16" fill="none" stroke="#fff"><path d="M6 4.500h8.500v8H4.500V9" strokeWidth="1.400" /><path d="M7 15h7" strokeWidth="1.600" /><path d="M1.500 1v4h4V1M3.500 5v4h2" strokeWidth="1.200" /></svg>
          </IconButton>
          <IconButton aria-label="Volume">
            <svg width="16" height="16" fill="none" stroke="#fff"><path d="M1 5.500h3l4-4v13l-4-4H1z" fill="#fff" /><path d="M10 5.500c1 1.500 1 3.500 0 5M12 4c2 2.500 2 5.500 0 8" strokeWidth="1.200" /></svg>
          </IconButton>
          <Clock dateTime="2014-12-18T10:36">10:36<br />18/12/2014</Clock>
          <ShowDesktop aria-label="Show desktop" />
        </Tray>
      </TaskBar>
    </Page>
  );
}
